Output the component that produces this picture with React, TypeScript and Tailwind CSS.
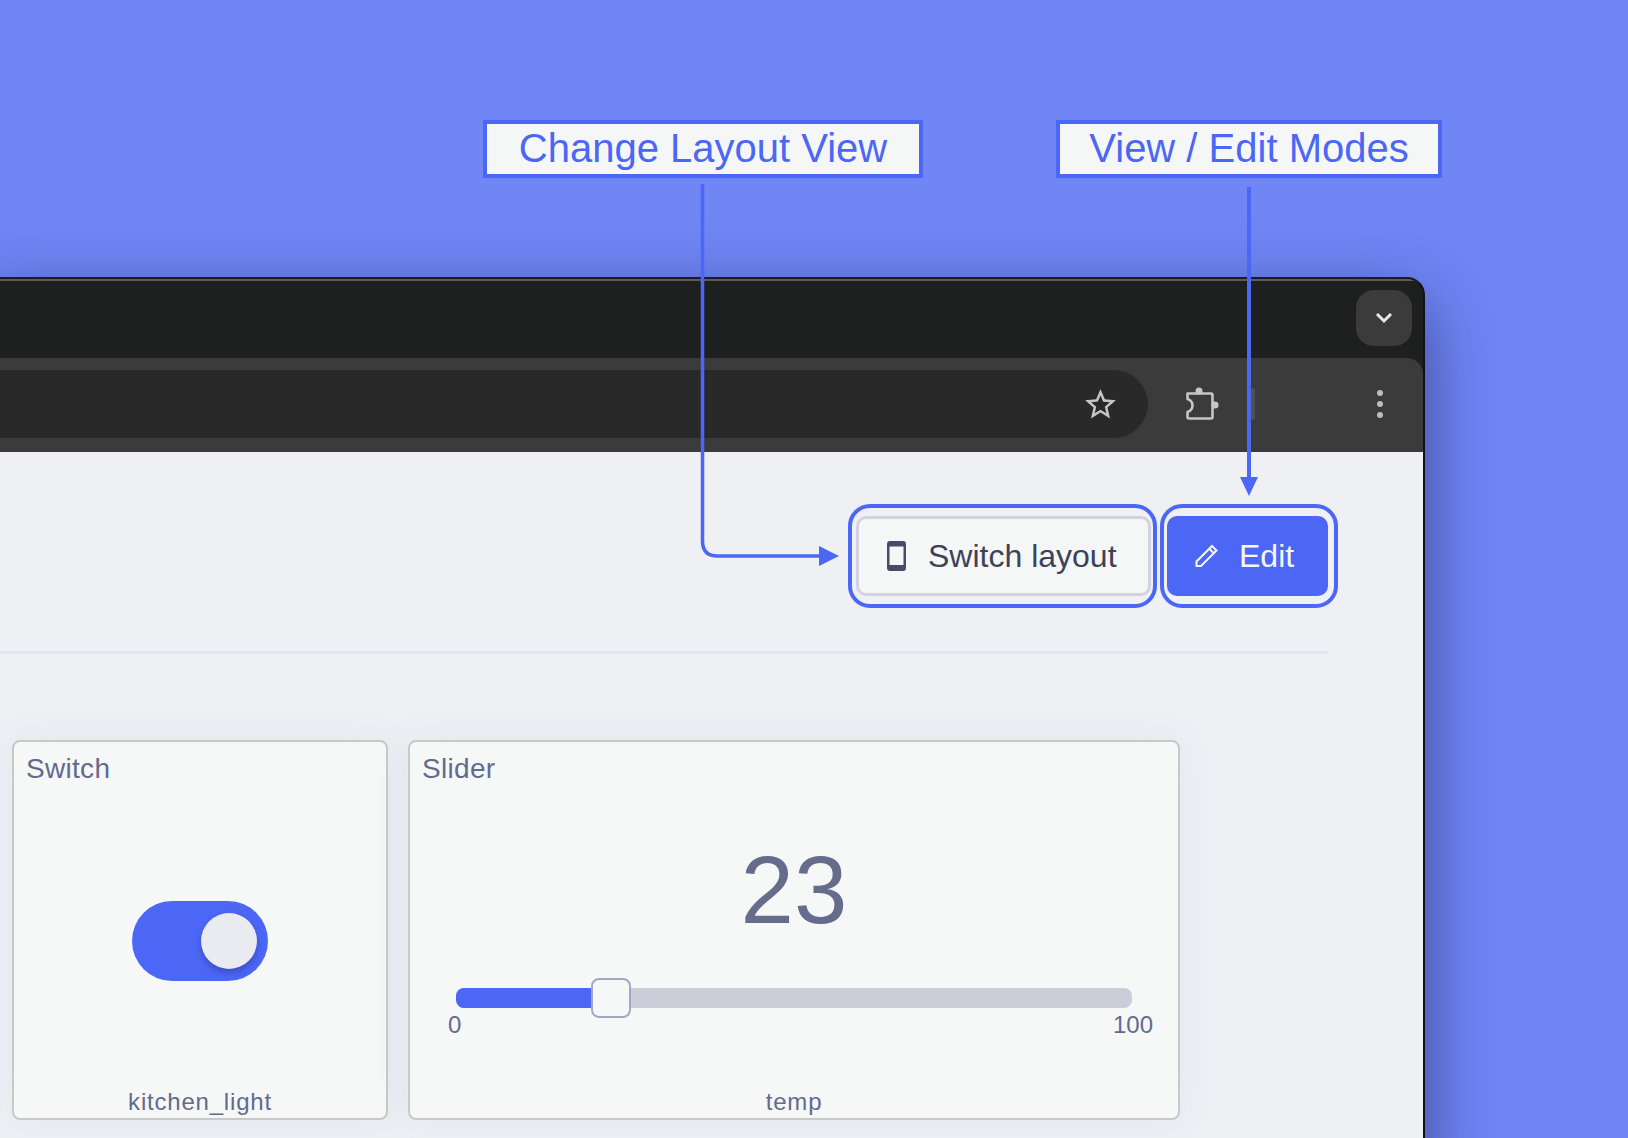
function Callout({ label, className }: { label: string; className: string }) {
  return (
    <div
      className={`flex h-[58px] items-center justify-center border-4 border-[#4c66f6] bg-[#f5f7f7] pb-[2px] text-[40px] leading-none text-[#4c66f6] ${className}`}
    >
      {label}
    </div>
  );
}

function CardTitle({ children }: { children: string }) {
  return (
    <div className="px-[12px] pt-[7px] text-[28px] leading-[40px] tracking-[0.3px] text-[#636a8f]">{children}</div>
  );
}

function CardCaption({ children }: { children: string }) {
  return (
    <div className="pb-[1px] text-center text-[24px] leading-[30px] tracking-[0.8px] text-[#636a8f]">{children}</div>
  );
}

function ExtensionIcon() {
  return (
    <svg width="34" height="34" viewBox="0 0 34 34" fill="none">
      <circle cx="14" cy="4" r="3.5" fill="#c6c6c6" />
      <circle cx="30" cy="18" r="3.5" fill="#c6c6c6" />
      <path
        d="M2.5 6.5H26a1.5 1.5 0 0 1 1.5 1.5v22a1.5 1.5 0 0 1-1.5 1.5H4A1.5 1.5 0 0 1 2.5 30v-5c3-1 5-3.8 5-6.5s-2-5.5-5-6.5z"
        stroke="#c6c6c6"
        strokeWidth="2.6"
        strokeLinejoin="round"
      />
    </svg>
  );
}

export default function App() {
  return (
    <div className="relative h-[1138px] w-[1628px] overflow-hidden bg-[#7086f5] pt-[120px] [font-family:'Liberation_Sans',sans-serif]">
      {/* Callout labels */}
      <div className="flex pl-[483px]">
        <Callout label="Change Layout View" className="w-[440px]" />
        <Callout label="View / Edit Modes" className="ml-[133px] w-[386px]" />
      </div>

      {/* Browser window */}
      <div className="ml-[-20px] mt-[99px] flex h-[900px] w-[1445px] flex-col overflow-hidden rounded-tr-[18px] border-2 border-b-0 border-[#111214] border-t-[#1c1d22] bg-[#1e201f] shadow-[0_24px_70px_rgba(16,20,70,0.55)]">
        <div className="flex h-[79px] shrink-0 justify-end border-t-2 border-[#5a5b5b] pr-[11px] pt-[9px]">
          <div className="flex h-[56px] w-[56px] items-center justify-center rounded-[18px] bg-[#3a3b3a]">
            <svg width="18" height="12" viewBox="0 0 18 12" fill="none">
              <path d="M2 2l7 7 7-7" stroke="#e8e8e8" strokeWidth="3" />
            </svg>
          </div>
        </div>

        <div className="flex h-[94px] shrink-0 items-center rounded-tr-[16px] bg-[#3a3b3a] pb-[2px]">
          <div className="flex h-[68px] w-[1166px] items-center justify-end rounded-r-[34px] bg-[#282928] pr-[29px]">
            <svg width="37" height="37" viewBox="0 0 24 24" fill="#c6c6c6">
              <path d="M22 9.24l-7.19-.62L12 2 9.19 8.63 2 9.24l5.46 4.73L5.82 21 12 17.27 18.18 21l-1.63-7.03L22 9.24zM12 15.4l-3.76 2.27 1-4.28-3.32-2.88 4.38-.38L12 6.1l1.71 4.04 4.38.38-3.32 2.88 1 4.28L12 15.4z" />
            </svg>
          </div>
          <div className="ml-[37px]">
            <ExtensionIcon />
          </div>
          <div className="ml-[32px] h-[32px] w-[4px] rounded-full bg-[#505150]" />
          <div className="ml-[122px] flex flex-col gap-[5px]">
            <div className="h-[6px] w-[6px] rounded-full bg-[#bdbdbd]" />
            <div className="h-[6px] w-[6px] rounded-full bg-[#bdbdbd]" />
            <div className="h-[6px] w-[6px] rounded-full bg-[#bdbdbd]" />
          </div>
        </div>

        <div className="flex-1 bg-[#eff0f4] pl-[30px] pr-[95px] pt-[64px]">
          <div className="flex justify-end gap-[16px]">
            <button className="relative flex h-[80px] w-[295px] items-center rounded-[10px] border-[3px] border-[#d2d3de] bg-[#f5f7f7] pl-[28px] text-[32px] text-[#3e4259]">
              <svg width="19" height="30" viewBox="0 0 19 30" fill="#474b68">
                <path
                  fillRule="evenodd"
                  d="M3 0h13a3 3 0 0 1 3 3v24a3 3 0 0 1-3 3H3a3 3 0 0 1-3-3V3a3 3 0 0 1 3-3zM2.5 5.5v18.5h14V5.5z"
                />
              </svg>
              <span className="ml-[22px]">Switch layout</span>
              <span className="absolute bottom-[-15px] left-[-11px] right-[-9px] top-[-15px] rounded-[22px] border-4 border-[#4c66f6]" />
            </button>
            <button className="relative flex h-[80px] w-[161px] items-center rounded-[10px] bg-[#4c66f6] pl-[27px] text-[32px] text-[#f5f7f7]">
              <svg width="24" height="24" viewBox="0 0 24 24" fill="none" stroke="#f5f7f7" strokeWidth="2">
                <path d="M2.5 22v-4.5L18 2l4.5 4.5L7 22z" />
                <path d="M15.5 5l4 4" />
              </svg>
              <span className="ml-[21px]">Edit</span>
              <span className="absolute bottom-[-12px] left-[-7px] right-[-10px] top-[-12px] rounded-[22px] border-4 border-[#4c66f6]" />
            </button>
          </div>

          <div className="ml-[-30px] mt-[55px] h-[3px] bg-[#e4e5ee]" />

          <div className="mt-[86px] flex gap-[20px]">
            <div className="flex h-[380px] w-[376px] flex-col rounded-[8px] border-2 border-[#c9c9c9] bg-[#f6f8f7] shadow-[0_0_40px_rgba(110,120,160,0.08)]">
              <CardTitle>Switch</CardTitle>
              <div className="flex flex-1 items-center justify-center pt-[5px]">
                <div className="flex h-[80px] w-[136px] items-center justify-end rounded-full bg-[#4c66f6] pr-[11px]">
                  <div className="h-[56px] w-[56px] rounded-full bg-[#e9ebf0] shadow-[0_4px_6px_rgba(30,40,110,0.35)]" />
                </div>
              </div>
              <CardCaption>kitchen_light</CardCaption>
            </div>

            <div className="flex h-[380px] w-[772px] flex-col rounded-[8px] border-2 border-[#c9c9c9] bg-[#f6f8f7] shadow-[0_0_40px_rgba(110,120,160,0.08)]">
              <CardTitle>Slider</CardTitle>
              <div className="flex-1 px-[46px]">
                <div className="mt-[53px] text-center text-[96px] leading-[96px] text-[#666c8c]">23</div>
                <div className="relative mt-[50px] h-[20px] rounded-[8px] bg-[#cccdd8]">
                  <div className="h-full w-[140px] rounded-l-[8px] bg-[#4c66f6]" />
                  <div className="absolute left-[135px] top-[-10px] h-[40px] w-[40px] rounded-[8px] border-2 border-[#a3a7c4] bg-[#f6f8f7]" />
                </div>
                <div className="ml-[-8px] mr-[-21px] mt-[3px] flex justify-between text-[24px] leading-[28px] text-[#636a8f]">
                  <span>0</span>
                  <span>100</span>
                </div>
              </div>
              <CardCaption>temp</CardCaption>
            </div>
          </div>
        </div>
      </div>

      {/* Callout arrows */}
      <svg className="pointer-events-none absolute left-0 top-0" width="1628" height="1138" fill="none">
        <path d="M702.5 184V541q0 15 15 15H822" stroke="#4c66f6" strokeWidth="3.5" />
        <path d="M819 546l20 10-20 10z" fill="#4c66f6" />
        <path d="M1249 187V480" stroke="#4c66f6" strokeWidth="4" />
        <path d="M1240 477h18l-9 19z" fill="#4c66f6" />
      </svg>
    </div>
  );
}
